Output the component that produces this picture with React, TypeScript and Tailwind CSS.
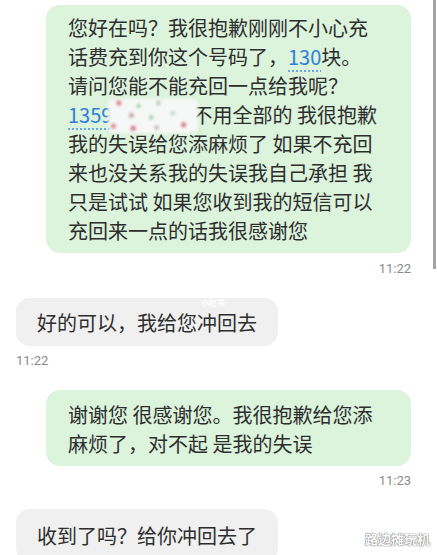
const font = { fontFamily: '"Noto Sans CJK SC", "Noto Sans", sans-serif' };

function Link({ children }: { children: React.ReactNode }) {
  return (
    <span className="text-[#2f80d8] underline decoration-[#6aa6e6] decoration-dotted decoration-2 underline-offset-[5px]">
      {children}
    </span>
  );
}

function Redacted() {
  // blurred patch over the rest of the phone number
  return (
    <span className="relative inline-block h-[20px] w-[80px] align-middle">
      <span className="absolute -left-[4px] -top-[9px] h-[34px] w-[90px] rounded-md bg-[#f6f8f7] blur-[1.5px] bg-[radial-gradient(circle_at_12%_12%,#d87a86_2px,transparent_3px),radial-gradient(circle_at_34%_20%,#9ac4a4_1.5px,transparent_2.5px),radial-gradient(circle_at_56%_12%,#a3b8a0_1.5px,transparent_2.5px),radial-gradient(circle_at_26%_48%,#c9a3a0_2px,transparent_3px),radial-gradient(circle_at_48%_54%,#9bbfa8_1.5px,transparent_2.5px),radial-gradient(circle_at_72%_42%,#b3c9b7_1.5px,transparent_2.5px),radial-gradient(circle_at_6%_80%,#d9848f_2px,transparent_3px),radial-gradient(circle_at_28%_86%,#d36b78_2px,transparent_3px),radial-gradient(circle_at_54%_84%,#b8a8a8_1.5px,transparent_2.5px),radial-gradient(circle_at_84%_76%,#d07482_2px,transparent_3px)]" />
    </span>
  );
}

function Time({ children, className }: { children: string; className: string }) {
  return (
    <div
      className={`text-[13px] leading-[16px] text-[#8a8a8a] ${className}`}
      style={{ fontFamily: 'Roboto, "Liberation Sans", sans-serif' }}
    >
      {children}
    </div>
  );
}

export default function App() {
  return (
    <div className="relative h-[555px] w-[437px] overflow-hidden bg-white text-[20px] leading-[29px] text-[#2e2e2e]" style={font}>
      {/* scrollbar */}
      <div className="absolute right-[1px] top-0 h-[269px] w-[3px] bg-[#a3a3a3]" />

      <div className="flex flex-col pt-[5px]">
        <div className="mr-[26px] w-[365px] self-end whitespace-nowrap rounded-[14px] bg-[#dcf3dc] pl-[22px] pt-[8px] pb-[8px]">
          <div>您好在吗？我很抱歉刚刚不小心充</div>
          <div>
            话费充到你这个号码了，<Link>130</Link>块。
          </div>
          <div>请问您能不能充回一点给我呢？</div>
          <div>
            <Link>1359</Link>
            <Redacted />
            不用全部的 我很抱歉
          </div>
          <div>我的失误给您添麻烦了 如果不充回</div>
          <div>来也没关系我的失误我自己承担 我</div>
          <div>只是试试 如果您收到我的短信可以</div>
          <div>充回来一点的话我很感谢您</div>
        </div>

        <Time className="mt-[8px] mr-[26px] self-end">11:22</Time>

        <div className="relative ml-[16px] mt-[21px] w-[262px] whitespace-nowrap rounded-[14px] bg-[#f0f0f0] pl-[21px] pt-[10px] pb-[9px]">
          好的可以，我给您冲回去
          <span className="absolute left-[185px] top-[0px] text-[8px] font-bold leading-[9px] text-white/90">小红书</span>
        </div>

        <Time className="mt-[7px] ml-[16px] self-start">11:22</Time>

        <div className="mt-[21px] mr-[26px] w-[365px] self-end whitespace-nowrap rounded-[14px] bg-[#dcf3dc] pl-[22px] pt-[10px] pb-[8px]">
          <div>谢谢您 很感谢您。我很抱歉给您添</div>
          <div>麻烦了，对不起 是我的失误</div>
        </div>

        <Time className="mt-[7px] mr-[26px] self-end">11:23</Time>

        <div className="ml-[16px] mt-[20px] w-[262px] whitespace-nowrap rounded-[14px] bg-[#f0f0f0] pl-[21px] pt-[12px] pb-[12px]">
          收到了吗？给你冲回去了
        </div>
      </div>

      {/* watermark */}
      <div className="absolute bottom-[8px] right-[7px] text-[13px] font-bold leading-[16px] text-white [text-shadow:0_0_1px_#777,0_0_1px_#777,0_0_1px_#777]">
        路边摊玩机
      </div>
    </div>
  );
}
